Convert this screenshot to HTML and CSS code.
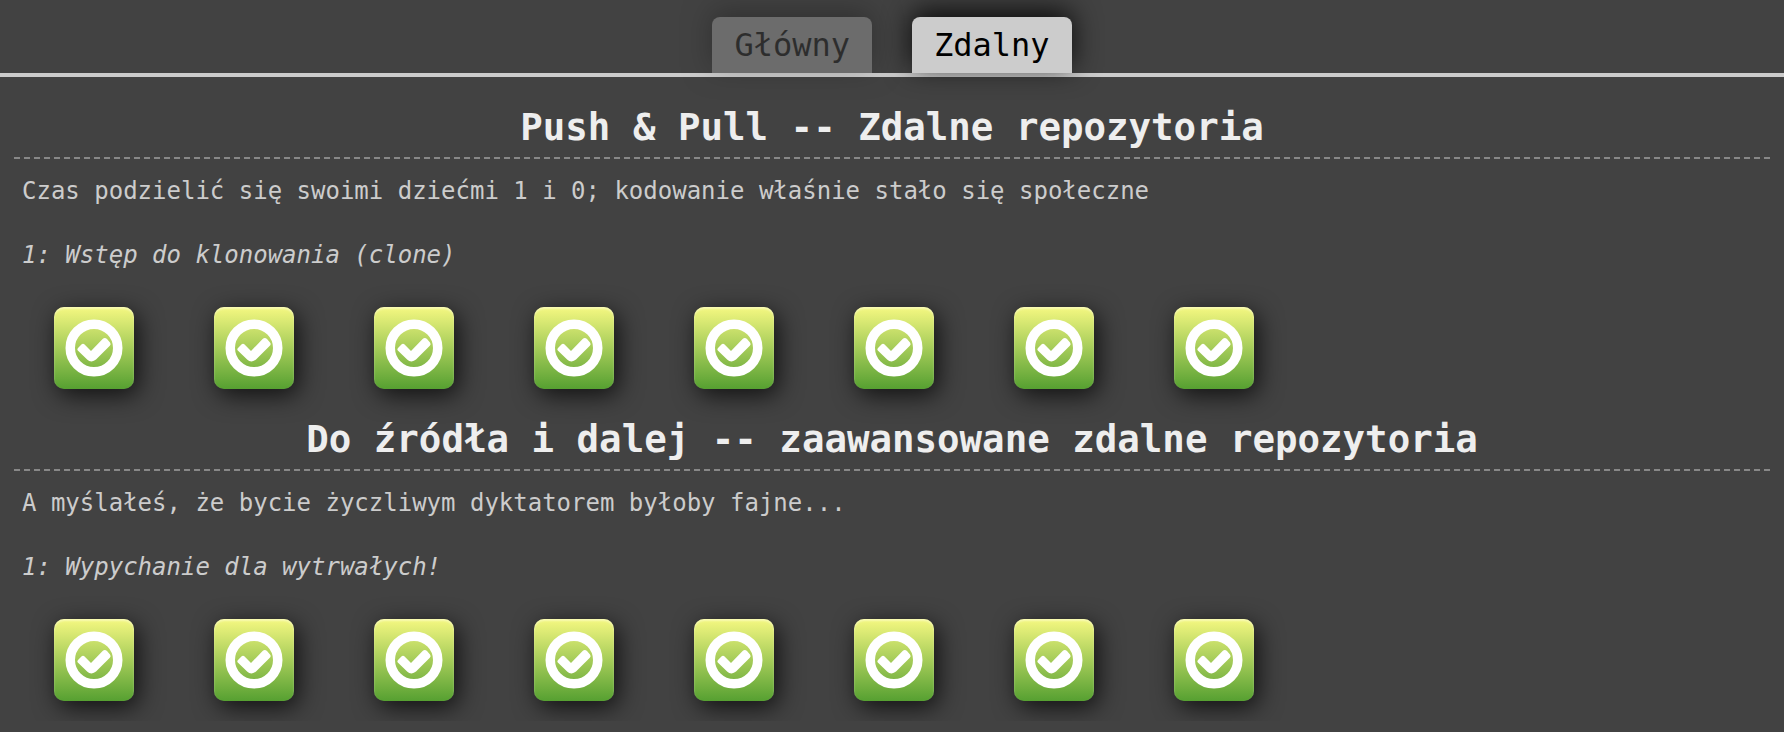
FILE: index.html
```html
<!DOCTYPE html>
<html lang="pl">
<head>
<meta charset="utf-8">
<title>Poziomy</title>
<link rel="stylesheet" href="styles.css">
</head>
<body>
<svg class="defs" aria-hidden="true"><symbol id="check" viewBox="0 0 58 58"><circle cx="29" cy="29" r="23.75" fill="none" stroke="#fff" stroke-width="9.5"/><path d="M12.8 29.2 16.4 25.4Q18 24 19.6 25.4L26 32 37.6 20Q39.8 17.8 42 20L45 23.4Q46.4 25 44.8 26.8L31 40.6Q29 42.4 26.5 42.4T22.4 40.8L12.8 31.6Q11.8 30.4 12.8 29.2Z" fill="#fff"/></symbol></svg>
<nav class="tabs">
<button class="tab" type="button">Główny</button>
<button class="tab active" type="button">Zdalny</button>
</nav>
<main class="levels">
<section class="series">
<h3 class="title">Push &amp; Pull -- Zdalne repozytoria</h3>
<p class="about">Czas podzielić się swoimi dziećmi 1 i 0; kodowanie właśnie stało się społeczne</p>
<p class="about name">1: Wstęp do klonowania (clone)</p>
<div class="icons">
<button class="level" type="button" aria-label="Poziom 1"><svg><use href="#check"/></svg></button>
<button class="level" type="button" aria-label="Poziom 2"><svg><use href="#check"/></svg></button>
<button class="level" type="button" aria-label="Poziom 3"><svg><use href="#check"/></svg></button>
<button class="level" type="button" aria-label="Poziom 4"><svg><use href="#check"/></svg></button>
<button class="level" type="button" aria-label="Poziom 5"><svg><use href="#check"/></svg></button>
<button class="level" type="button" aria-label="Poziom 6"><svg><use href="#check"/></svg></button>
<button class="level" type="button" aria-label="Poziom 7"><svg><use href="#check"/></svg></button>
<button class="level" type="button" aria-label="Poziom 8"><svg><use href="#check"/></svg></button>
</div>
</section>
<section class="series">
<h3 class="title">Do źródła i dalej -- zaawansowane zdalne repozytoria</h3>
<p class="about">A myślałeś, że bycie życzliwym dyktatorem byłoby fajne...</p>
<p class="about name">1: Wypychanie dla wytrwałych!</p>
<div class="icons">
<button class="level" type="button" aria-label="Poziom 1"><svg><use href="#check"/></svg></button>
<button class="level" type="button" aria-label="Poziom 2"><svg><use href="#check"/></svg></button>
<button class="level" type="button" aria-label="Poziom 3"><svg><use href="#check"/></svg></button>
<button class="level" type="button" aria-label="Poziom 4"><svg><use href="#check"/></svg></button>
<button class="level" type="button" aria-label="Poziom 5"><svg><use href="#check"/></svg></button>
<button class="level" type="button" aria-label="Poziom 6"><svg><use href="#check"/></svg></button>
<button class="level" type="button" aria-label="Poziom 7"><svg><use href="#check"/></svg></button>
<button class="level" type="button" aria-label="Poziom 8"><svg><use href="#check"/></svg></button>
</div>
</section>
</main>
</body>
</html>
```
FILE: styles.css
```css
* {
  box-sizing: border-box;
}

body {
  margin: 0;
  background: #424242;
  color: #ccc;
  font-family: "DejaVu Sans Mono", monospace;
  font-size: 32px;
}

.defs {
  display: none;
}

.tabs {
  display: flex;
  justify-content: center;
  gap: 40px;
  padding-top: 17px;
  border-bottom: 4px solid #ccc;
}

.tab {
  height: 56px;
  padding: 0 22px;
  border: 0;
  border-radius: 8px 8px 0 0;
  background: #ccc;
  color: #000;
  font: inherit;
  line-height: 56px;
  opacity: 0.3;
  box-shadow: 0 -6px 28px rgba(0, 0, 0, 0.85);
}

.tab.active {
  opacity: 1;
}

.levels {
  padding: 20px 14px 0;
}

.title {
  margin: 0;
  padding: 4px 0;
  border-bottom: 2px dashed #888;
  color: #eee;
  line-height: 52px;
  text-align: center;
}

.about {
  margin: 0;
  padding: 16px 8px;
  font-size: 24px;
  line-height: 32px;
}

.name {
  font-style: italic;
}

.icons {
  display: flex;
  flex-wrap: wrap;
  gap: 80px;
  padding: 20px 40px;
}

.level {
  display: flex;
  align-items: center;
  justify-content: center;
  width: 80px;
  height: 82px;
  padding: 0;
  border: 0;
  border-radius: 10px;
  background: linear-gradient(#f5f881, #56a031);
  box-shadow: inset 0 2px 2px rgba(255, 255, 255, 0.4), 4px 6px 24px rgba(0, 0, 0, 0.75);
}

.level svg {
  width: 58px;
  height: 58px;
}
```
